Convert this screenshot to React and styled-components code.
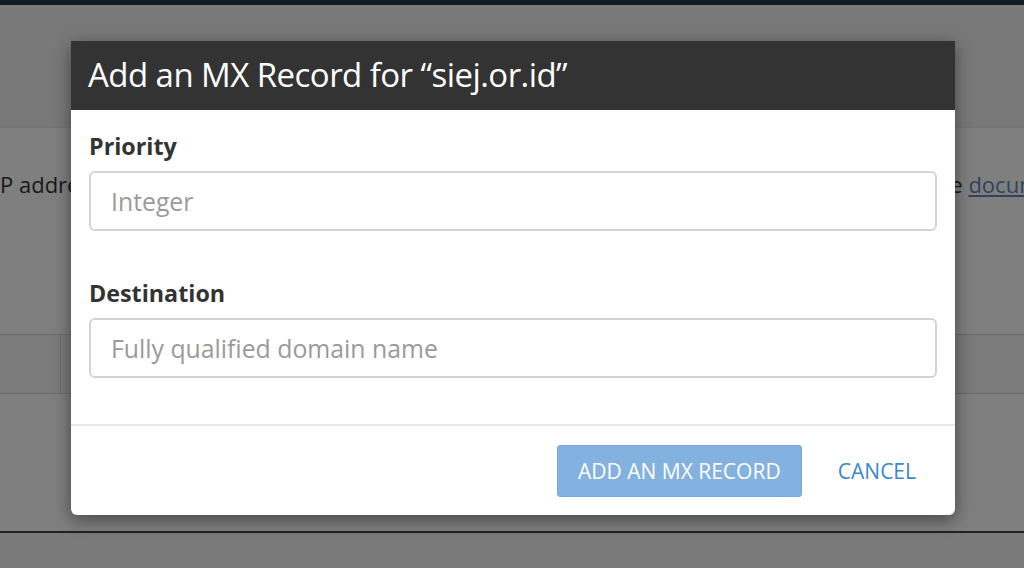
import React from "react";
import styled, { createGlobalStyle } from "styled-components";

const Global = createGlobalStyle`
  html, body { margin: 0; padding: 0; }
  body {
    font-family: "Open Sans", "Liberation Sans", sans-serif;
    background: #ffffff;
    width: 1024px;
    height: 568px;
    overflow: hidden;
  }
  * { box-sizing: border-box; }
`;

const Page = styled.div`
  position: relative;
  width: 1024px;
  height: 568px;
  overflow: hidden;
  background: #fff;
  display: flex;
  flex-direction: column;
`;

const NavBar = styled.div`
  height: 5px;
  flex: 0 0 5px;
  background: #27364b;
`;

const Hero = styled.div`
  height: 123px;
  flex: 0 0 123px;
  background: #f2f2f2;
  border-bottom: 1px solid #e6e6e6;
`;

const Intro = styled.div`
  display: flex;
  align-items: baseline;
  margin-top: 41px;
  font-size: 22px;
  color: #333;
  white-space: nowrap;
  line-height: 30px;
  overflow: hidden;
`;

const IntroLead = styled.span`
  flex: 0 0 929px;
  overflow: hidden;
`;

const IntroTail = styled.span`
  flex: 0 0 auto;
`;

const DocLink = styled.a`
  color: #5a8ab8;
  text-decoration: underline;
`;

const Table = styled.div`
  margin-top: 135px;
  display: flex;
  height: 60px;
  border-top: 1px solid #d6d6d6;
  border-bottom: 1px solid #d6d6d6;
  background: #f7f7f7;
`;

const Cell = styled.div`
  flex: ${(p) => (p.$grow ? "1 1 auto" : "0 0 61px")};
  border-right: ${(p) => (p.$grow ? "none" : "1px solid #d6d6d6")};
`;

const Footer = styled.div`
  margin-top: 137px;
  border-top: 2px solid #444;
  flex: 1 1 auto;
  background: #f5f5f5;
`;

const Overlay = styled.div`
  position: absolute;
  inset: 0;
  background: rgba(0, 0, 0, 0.5);
`;

const Modal = styled.div`
  position: absolute;
  left: 71px;
  top: 41px;
  width: 884px;
  background: #fff;
  border-radius: 0 0 6px 6px;
  box-shadow: 0 5px 18px rgba(0, 0, 0, 0.45);
  display: flex;
  flex-direction: column;
`;

const Header = styled.div`
  height: 69px;
  background: #333333;
  display: flex;
  align-items: center;
  padding: 0 17px;
`;

const Title = styled.h2`
  margin: 0;
  font-family: "Open Sans", sans-serif;
  font-weight: 400;
  font-size: 33px;
  letter-spacing: -0.55px;
  color: #fff;
  line-height: 1;
  position: relative;
  top: -1px;
`;

const Body = styled.div`
  padding: 19px 18px 46px;
  display: flex;
  flex-direction: column;
  gap: 45px;
  border-bottom: 2px solid #e8e8e8;
`;

const Field = styled.div`
  display: flex;
  flex-direction: column;
  gap: 8px;
`;

const Label = styled.label`
  font-size: 23.3px;
  font-weight: 700;
  color: #333;
  line-height: 34px;
`;

const Input = styled.input`
  height: 60px;
  width: 100%;
  border: 2px solid #d3d3d3;
  border-radius: 6px;
  padding: 0 20px;
  font-family: "Open Sans", sans-serif;
  font-size: 24.8px;
  color: #333;
  background: #fff;
  outline: none;
  &::placeholder {
    color: #9a9a9a;
  }
`;

const Actions = styled.div`
  display: flex;
  justify-content: flex-end;
  align-items: center;
  gap: 36px;
  padding: 19px 39px 18px 18px;
`;

const PrimaryButton = styled.button`
  height: 52px;
  width: 245px;
  border: 1px solid #78a9da;
  border-radius: 3px;
  background: #83b2e0;
  color: #fff;
  font-family: "Open Sans", sans-serif;
  font-size: 21px;
  text-transform: uppercase;
  padding: 0;
  cursor: not-allowed;
`;

const TextButton = styled.button`
  border: none;
  background: none;
  padding: 0;
  color: #3b87c9;
  font-family: "Open Sans", sans-serif;
  font-size: 21px;
  text-transform: uppercase;
  cursor: pointer;
`;

export default function App() {
  return (
    <>
      <Global />
      <Page>
        <NavBar />
        <Hero />
        <Intro>
          <IntroLead>
            P addresses of the mail servers that accept email for this domain. For more details, see
          </IntroLead>
          <IntroTail>
            the <DocLink href="#">documentation</DocLink>.
          </IntroTail>
        </Intro>
        <Table>
          <Cell />
          <Cell $grow />
        </Table>
        <Footer />
        <Overlay />
        <Modal role="dialog" aria-labelledby="mx-title">
          <Header>
            <Title id="mx-title">Add an MX Record for “siej.or.id”</Title>
          </Header>
          <Body>
            <Field>
              <Label htmlFor="priority">Priority</Label>
              <Input id="priority" placeholder="Integer" />
            </Field>
            <Field>
              <Label htmlFor="destination">Destination</Label>
              <Input id="destination" placeholder="Fully qualified domain name" />
            </Field>
          </Body>
          <Actions>
            <PrimaryButton disabled>Add an MX Record</PrimaryButton>
            <TextButton>Cancel</TextButton>
          </Actions>
        </Modal>
      </Page>
    </>
  );
}
